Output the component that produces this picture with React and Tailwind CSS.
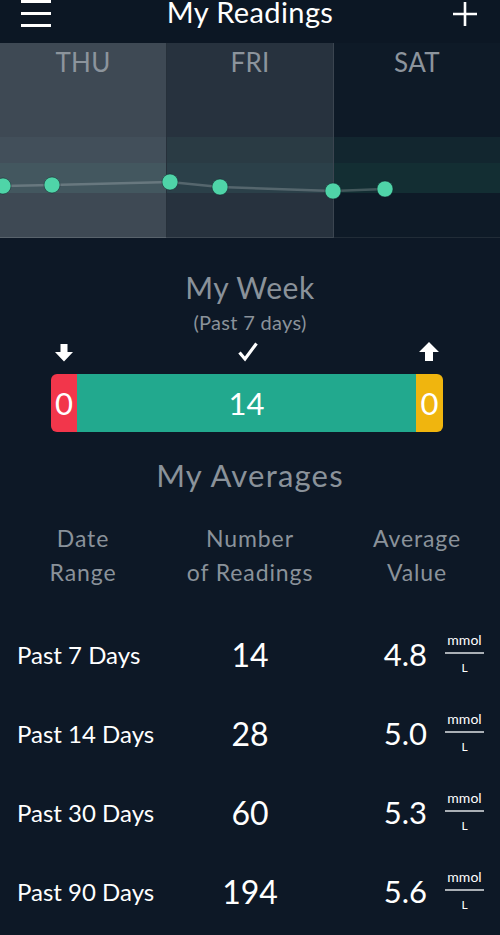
import React from "react";

const FONT = { fontFamily: "Lato, 'Open Sans', sans-serif" };

function DayCol({ label, cls, b1, b2 }) {
  return (
    <div className={`flex flex-col h-full ${cls}`}>
      <div className="pt-[6px] h-[94px] text-center text-[26px] leading-[26px] text-[#8c949c] tracking-[0.3px]">
        {label}
      </div>
      <div className={`h-[26px] ${b1}`} />
      <div className={`h-[30px] ${b2}`} />
      <div className="flex-1" />
    </div>
  );
}

function Unit() {
  return (
    <div className="flex flex-col items-center w-[39px] ml-[18px] text-white">
      <div className="text-[14px] leading-[14px] -mt-[2px]">mmol</div>
      <div className="w-[39px] h-[1.5px] bg-[#a9afb5] mt-[5px]" />
      <div className="text-[12px] leading-[12px] mt-[8px]">L</div>
    </div>
  );
}

const rows = [
  ["Past 7 Days", "14", "4.8"],
  ["Past 14 Days", "28", "5.0"],
  ["Past 30 Days", "60", "5.3"],
  ["Past 90 Days", "194", "5.6"],
];

export default function App() {
  const pts = [
    [3, 143],
    [52, 142],
    [170, 139],
    [220, 144],
    [333, 148],
    [385, 146],
  ];
  return (
    <div className="w-[500px] h-[935px] overflow-hidden bg-[#0d1826]" style={FONT}>
      {/* Header */}
      <div className="h-[43px] bg-[#0c1724] grid grid-cols-[1fr_auto_1fr] items-start">
        <div className="pl-[21px] flex flex-col gap-[9px]">
          <div className="w-[30px] h-[3px] bg-white" />
          <div className="w-[30px] h-[3px] bg-white" />
          <div className="w-[30px] h-[3px] bg-white" />
        </div>
        <div className="text-white text-[29px] leading-[29px] -mt-[3px] tracking-[0.4px]">
          My Readings
        </div>
        <div className="flex justify-end pr-[23px] pt-[2px]">
          <svg width="24" height="24" viewBox="0 0 24 24">
            <path d="M12 0V24M0 12H24" stroke="white" strokeWidth="2.6" />
          </svg>
        </div>
      </div>

      {/* Chart */}
      <div className="relative flex h-[195px]">
        <DayCol
          label="THU"
          cls="w-[167px] bg-[#3e4954] border-r border-r-[#26303a] border-b border-b-[#59636c]"
          b1="bg-[#424f5a]"
          b2="bg-[#43575f]"
        />
        <DayCol
          label="FRI"
          cls="w-[167px] bg-[#27323e] border-r border-r-[#3b4550] border-b border-b-[#3d4751]"
          b1="bg-[#2a3b44]"
          b2="bg-[#2b4049]"
        />
        <DayCol
          label="SAT"
          cls="flex-1 bg-[#0e1a27] border-b border-b-[#212c37]"
          b1="bg-[#12262f]"
          b2="bg-[#132e33]"
        />
        <svg className="absolute inset-0" width="500" height="195" viewBox="0 0 500 195">
          <polyline
            points={"0,143 " + pts.map((p) => p.join(",")).join(" ")}
            fill="none"
            stroke="rgba(255,255,255,0.2)"
            strokeWidth="2.5"
          />
          {pts.map(([x, y], i) => (
            <circle key={i} cx={x} cy={y} r="8" fill="#4fd4a8" stroke="rgba(10,20,30,0.45)" strokeWidth="1" />
          ))}
        </svg>
      </div>

      {/* My Week */}
      <div className="mt-[34px] text-center text-[30px] leading-[30px] tracking-[0.5px] text-[#8a929a]">My Week</div>
      <div className="mt-[10px] text-center text-[20px] leading-[20px] tracking-[0.3px] text-[#8a929a]">(Past 7 days)</div>

      <div className="mt-[10px] h-[20px] relative flex">
        <div className="w-[55px]" />
        <svg width="18" height="20" viewBox="0 0 18 20">
          <path d="M5.5 2H12.5V10H18L9 19.5L0 10H5.5Z" fill="white" />
        </svg>
        <div className="w-[165px]" />
        <svg width="20" height="20" viewBox="0 0 20 20">
          <path d="M1.5 10.5L7 17L18.5 1.5" fill="none" stroke="white" strokeWidth="3.2" strokeLinejoin="miter" />
        </svg>
        <div className="w-[161px]" />
        <svg width="20" height="20" viewBox="0 0 20 20">
          <path d="M10 0L20 10H14V19H6V10H0Z" fill="white" />
        </svg>
      </div>

      <div className="mt-[12px] mx-[51px] w-[392px] h-[58px] rounded-[6px] overflow-hidden flex text-white text-[31px]">
        <div className="w-[26px] bg-[#f2364b] flex items-center justify-center">0</div>
        <div className="flex-1 bg-[#22a98e] flex items-center justify-center">14</div>
        <div className="w-[27px] bg-[#f0b50e] flex items-center justify-center">0</div>
      </div>

      {/* My Averages */}
      <div className="mt-[28px] text-center text-[31px] leading-[31px] tracking-[1.2px] text-[#8a929a]">My Averages</div>

      <div className="mt-[30px] grid grid-cols-[166px_168px_166px] text-center text-[23px] leading-[34px] tracking-[0.9px] text-[#8a929a]">
        <div>
          Date
          <br />
          Range
        </div>
        <div>
          Number
          <br />
          of Readings
        </div>
        <div>
          Average
          <br />
          Value
        </div>
      </div>

      <div className="mt-[26px] flex flex-col">
        {rows.map(([label, n, v]) => (
          <div key={label} className="h-[79px] grid grid-cols-[166px_168px_166px] items-center text-white">
            <div className="pl-[17px] text-[24px] leading-none">{label}</div>
            <div className="text-center text-[32px] leading-none">{n}</div>
            <div className="flex items-center">
              <div className="w-[93px] text-right text-[31px] leading-none">{v}</div>
              <Unit />
            </div>
          </div>
        ))}
      </div>
    </div>
  );
}
